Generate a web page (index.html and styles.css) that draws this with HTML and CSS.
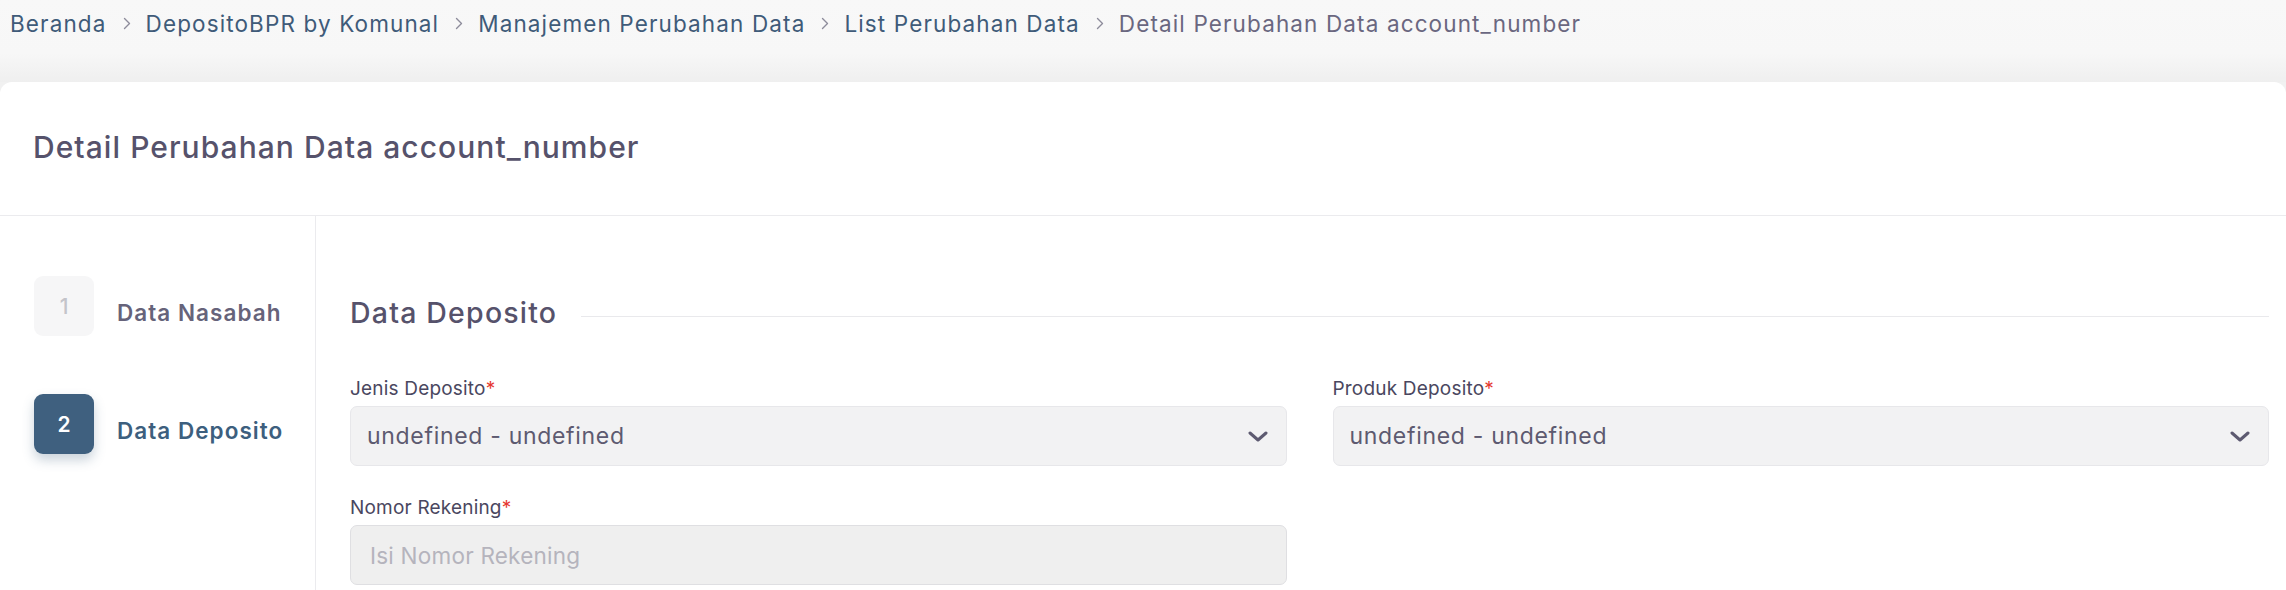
FILE: index.html
```html
<!DOCTYPE html>
<html lang="id">
<head>
<meta charset="utf-8">
<title>Detail Perubahan Data account_number</title>
<link rel="stylesheet" href="styles.css">
</head>
<body>
<div class="topbar">
  <nav class="breadcrumb">
    <a class="crumb link">Beranda</a>
    <span class="sep"><svg width="8" height="13" viewBox="0 0 8 13"><polyline points="1.5,1.5 6.5,6.5 1.5,11.5" fill="none" stroke="#8d8c9b" stroke-width="1.4" stroke-linecap="round" stroke-linejoin="round"/></svg></span>
    <a class="crumb link">DepositoBPR by Komunal</a>
    <span class="sep"><svg width="8" height="13" viewBox="0 0 8 13"><polyline points="1.5,1.5 6.5,6.5 1.5,11.5" fill="none" stroke="#8d8c9b" stroke-width="1.4" stroke-linecap="round" stroke-linejoin="round"/></svg></span>
    <a class="crumb link">Manajemen Perubahan Data</a>
    <span class="sep"><svg width="8" height="13" viewBox="0 0 8 13"><polyline points="1.5,1.5 6.5,6.5 1.5,11.5" fill="none" stroke="#8d8c9b" stroke-width="1.4" stroke-linecap="round" stroke-linejoin="round"/></svg></span>
    <a class="crumb link">List Perubahan Data</a>
    <span class="sep"><svg width="8" height="13" viewBox="0 0 8 13"><polyline points="1.5,1.5 6.5,6.5 1.5,11.5" fill="none" stroke="#8d8c9b" stroke-width="1.4" stroke-linecap="round" stroke-linejoin="round"/></svg></span>
    <span class="crumb current">Detail Perubahan Data account_number</span>
  </nav>
</div>
<main class="card">
  <header class="card-header">
    <h1 class="card-title">Detail Perubahan Data account_number</h1>
  </header>
  <div class="card-body">
    <aside class="steps">
      <div class="step">
        <div class="step-box">1</div>
        <div class="step-label">Data Nasabah</div>
      </div>
      <div class="step active">
        <div class="step-box">2</div>
        <div class="step-label">Data Deposito</div>
      </div>
    </aside>
    <section class="content">
      <div class="section-head">
        <h2 class="section-title">Data Deposito</h2>
        <div class="section-line"></div>
      </div>
      <div class="form-grid">
        <div class="field">
          <label class="field-label">Jenis Deposito<span class="req">*</span></label>
          <div class="select">
            <span class="select-value">undefined - undefined</span>
            <svg class="chev" width="20" height="11" viewBox="0 0 20 11"><polyline points="2,2 10,9 18,2" fill="none" stroke="#5d5a70" stroke-width="3" stroke-linecap="round" stroke-linejoin="round"/></svg>
          </div>
        </div>
        <div class="field">
          <label class="field-label">Produk Deposito<span class="req">*</span></label>
          <div class="select">
            <span class="select-value">undefined - undefined</span>
            <svg class="chev" width="20" height="11" viewBox="0 0 20 11"><polyline points="2,2 10,9 18,2" fill="none" stroke="#5d5a70" stroke-width="3" stroke-linecap="round" stroke-linejoin="round"/></svg>
          </div>
        </div>
        <div class="field">
          <label class="field-label">Nomor Rekening<span class="req">*</span></label>
          <div class="input"><span class="placeholder">Isi Nomor Rekening</span></div>
        </div>
      </div>
    </section>
  </div>
</main>
</body>
</html>
```

FILE: styles.css
```css
* { box-sizing: border-box; }
html, body { margin: 0; padding: 0; }
body {
  width: 2286px;
  height: 590px;
  overflow: hidden;
  background: #f1f1f1;
  font-family: Inter, "Noto Sans", "Liberation Sans", sans-serif;
}
.topbar {
  height: 82px;
  padding: 0 10px;
  background: linear-gradient(#f8f8f8 0%, #f7f7f7 65%, #efefef 100%);
}
.breadcrumb {
  display: flex;
  align-items: center;
  height: 47px;
  font-size: 22.5px;
  letter-spacing: 0.05em;
}
.crumb { white-space: nowrap; }
.link { color: #3f5b79; }
.current { color: #6a6780; }
.sep {
  display: flex;
  align-items: center;
  padding: 0 15px 0 16px;
}
.card {
  height: 508px;
  background: #fff;
  border-radius: 12px 12px 0 0;
}
.card-header {
  height: 134px;
  border-bottom: 1px solid #ebebee;
  display: flex;
  align-items: center;
  padding-left: 33px;
  padding-bottom: 3px;
}
.card-title {
  margin: 0;
  font-size: 30px;
  font-weight: 500;
  color: #56526b;
  letter-spacing: 0.035em;
}
.card-body {
  display: flex;
  height: 374px;
}
.steps {
  width: 316px;
  border-right: 1px solid #ebebee;
  padding: 60px 0 0 34px;
  display: flex;
  flex-direction: column;
  gap: 58px;
}
.step {
  display: flex;
  align-items: center;
  gap: 23px;
}
.step-box {
  width: 60px;
  height: 60px;
  border-radius: 9px;
  background: #f6f6f7;
  color: #c4c4ca;
  font-size: 21px;
  font-weight: 500;
  display: flex;
  align-items: center;
  justify-content: center;
}
.step-label {
  padding-top: 12px;
  font-size: 22.5px;
  font-weight: 600;
  color: #66637a;
  letter-spacing: 0.046em;
}
.step.active .step-box {
  background: #3f607f;
  color: #fff;
  font-weight: 600;
  box-shadow: 0 6px 12px rgba(63, 96, 127, 0.28);
}
.step.active .step-label { color: #3d5f7e; }
.content {
  flex: 1;
  padding: 76px 17px 0 34px;
}
.section-head {
  display: flex;
  align-items: center;
  height: 40px;
}
.section-title {
  margin: 0;
  font-size: 28.5px;
  font-weight: 500;
  color: #56526b;
  letter-spacing: 0.042em;
  white-space: nowrap;
}
.section-line {
  flex: 1;
  height: 1px;
  background: #e9e9ec;
  margin: 8px 0 0 24px;
}
.form-grid {
  margin-top: 43px;
  display: grid;
  grid-template-columns: 1fr 1fr;
  column-gap: 46px;
  row-gap: 28px;
}
.field { display: flex; flex-direction: column; }
.field-label {
  font-size: 19px;
  line-height: 28px;
  color: #4a4760;
  margin-bottom: 3px;
  letter-spacing: 0.01em;
}
.req { color: #e5392f; }
.select, .input {
  height: 60px;
  border-radius: 7px;
  display: flex;
  align-items: center;
  padding: 0 18px 0 16px;
}
.select {
  background: #f2f2f3;
  border: 1px solid #e7e7ea;
  justify-content: space-between;
}
.input {
  background: #efefef;
  border: 1px solid #dfdfe2;
}
.select-value {
  font-size: 23px;
  color: #5d5a70;
  letter-spacing: 0.03em;
}
.placeholder {
  font-size: 22.5px;
  color: #b5b4bd;
  padding-left: 3px;
  letter-spacing: 0.01em;
}
.chev { display: block; }
```
